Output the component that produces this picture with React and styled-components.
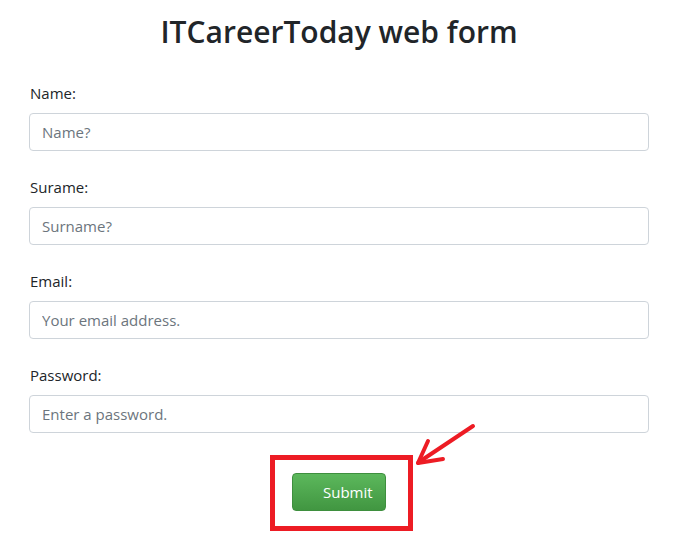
import React from "react";
import styled, { createGlobalStyle } from "styled-components";

const Global = createGlobalStyle`
  html, body { margin: 0; padding: 0; background: #fff; }
  body { font-family: "Open Sans", "Noto Sans", sans-serif; color: #212529; }
  * { box-sizing: border-box; }
`;

const Page = styled.div`
  width: 620px;
  margin-left: 29px;
  padding-top: 12px;
`;

const Title = styled.h2`
  margin: 0 0 29px;
  text-align: center;
  font-size: 30px;
  line-height: 40px;
  font-weight: 600;
  color: #212529;
`;

const Group = styled.div`
  display: flex;
  flex-direction: column;
  margin-bottom: 24px;
`;

const Label = styled.label`
  font-size: 15px;
  line-height: 24px;
  margin-bottom: 8px;
  padding-left: 1px;
  color: #212529;
`;

const Input = styled.input`
  height: 38px;
  width: 100%;
  padding: 0 12px;
  border: 1px solid #ced4da;
  border-radius: 4px;
  font-family: "Open Sans", "Noto Sans", sans-serif;
  font-size: 15px;
  color: #495057;
  outline: none;
  &::placeholder { color: #6c757d; opacity: 1; }
`;

const ButtonRow = styled.div`
  display: flex;
  justify-content: center;
  margin-top: -2px;
`;

const Highlight = styled.div`
  position: relative;
  margin-left: 5px;
  border: 5px solid #ed1c24;
  padding: 13px 22px 15px 17px;
`;

const SubmitButton = styled.button`
  width: 94px;
  height: 38px;
  padding: 0 12px 0 30px;
  text-align: left;
  border: 1px solid #3e8f3e;
  border-radius: 4px;
  background: linear-gradient(to bottom, #5cb85c 0%, #419641 100%);
  color: #fff;
  font-family: "Open Sans", "Noto Sans", sans-serif;
  font-size: 15px;
  cursor: pointer;
`;

const Arrow = styled.svg`
  position: absolute;
  left: 135px;
  top: -41px;
  width: 70px;
  height: 50px;
  overflow: visible;
`;

const fields = [
  { label: "Name:", placeholder: "Name?", type: "text" },
  { label: "Surame:", placeholder: "Surname?", type: "text" },
  { label: "Email:", placeholder: "Your email address.", type: "email" },
  { label: "Password:", placeholder: "Enter a password.", type: "password" },
];

export default function App() {
  return (
    <>
      <Global />
      <Page>
        <Title>ITCareerToday web form</Title>
        {fields.map((f) => (
          <Group key={f.label}>
            <Label>{f.label}</Label>
            <Input type={f.type} placeholder={f.placeholder} />
          </Group>
        ))}
        <ButtonRow>
          <Highlight>
            <SubmitButton type="button">Submit</SubmitButton>
            <Arrow viewBox="0 0 70 50">
              <g stroke="#ed1c24" strokeWidth="4" strokeLinecap="round" fill="none">
                <line x1="63" y1="7" x2="9" y2="43" />
                <line x1="8" y1="44" x2="18" y2="22" />
                <line x1="8" y1="44" x2="33" y2="40" />
              </g>
            </Arrow>
          </Highlight>
        </ButtonRow>
      </Page>
    </>
  );
}
